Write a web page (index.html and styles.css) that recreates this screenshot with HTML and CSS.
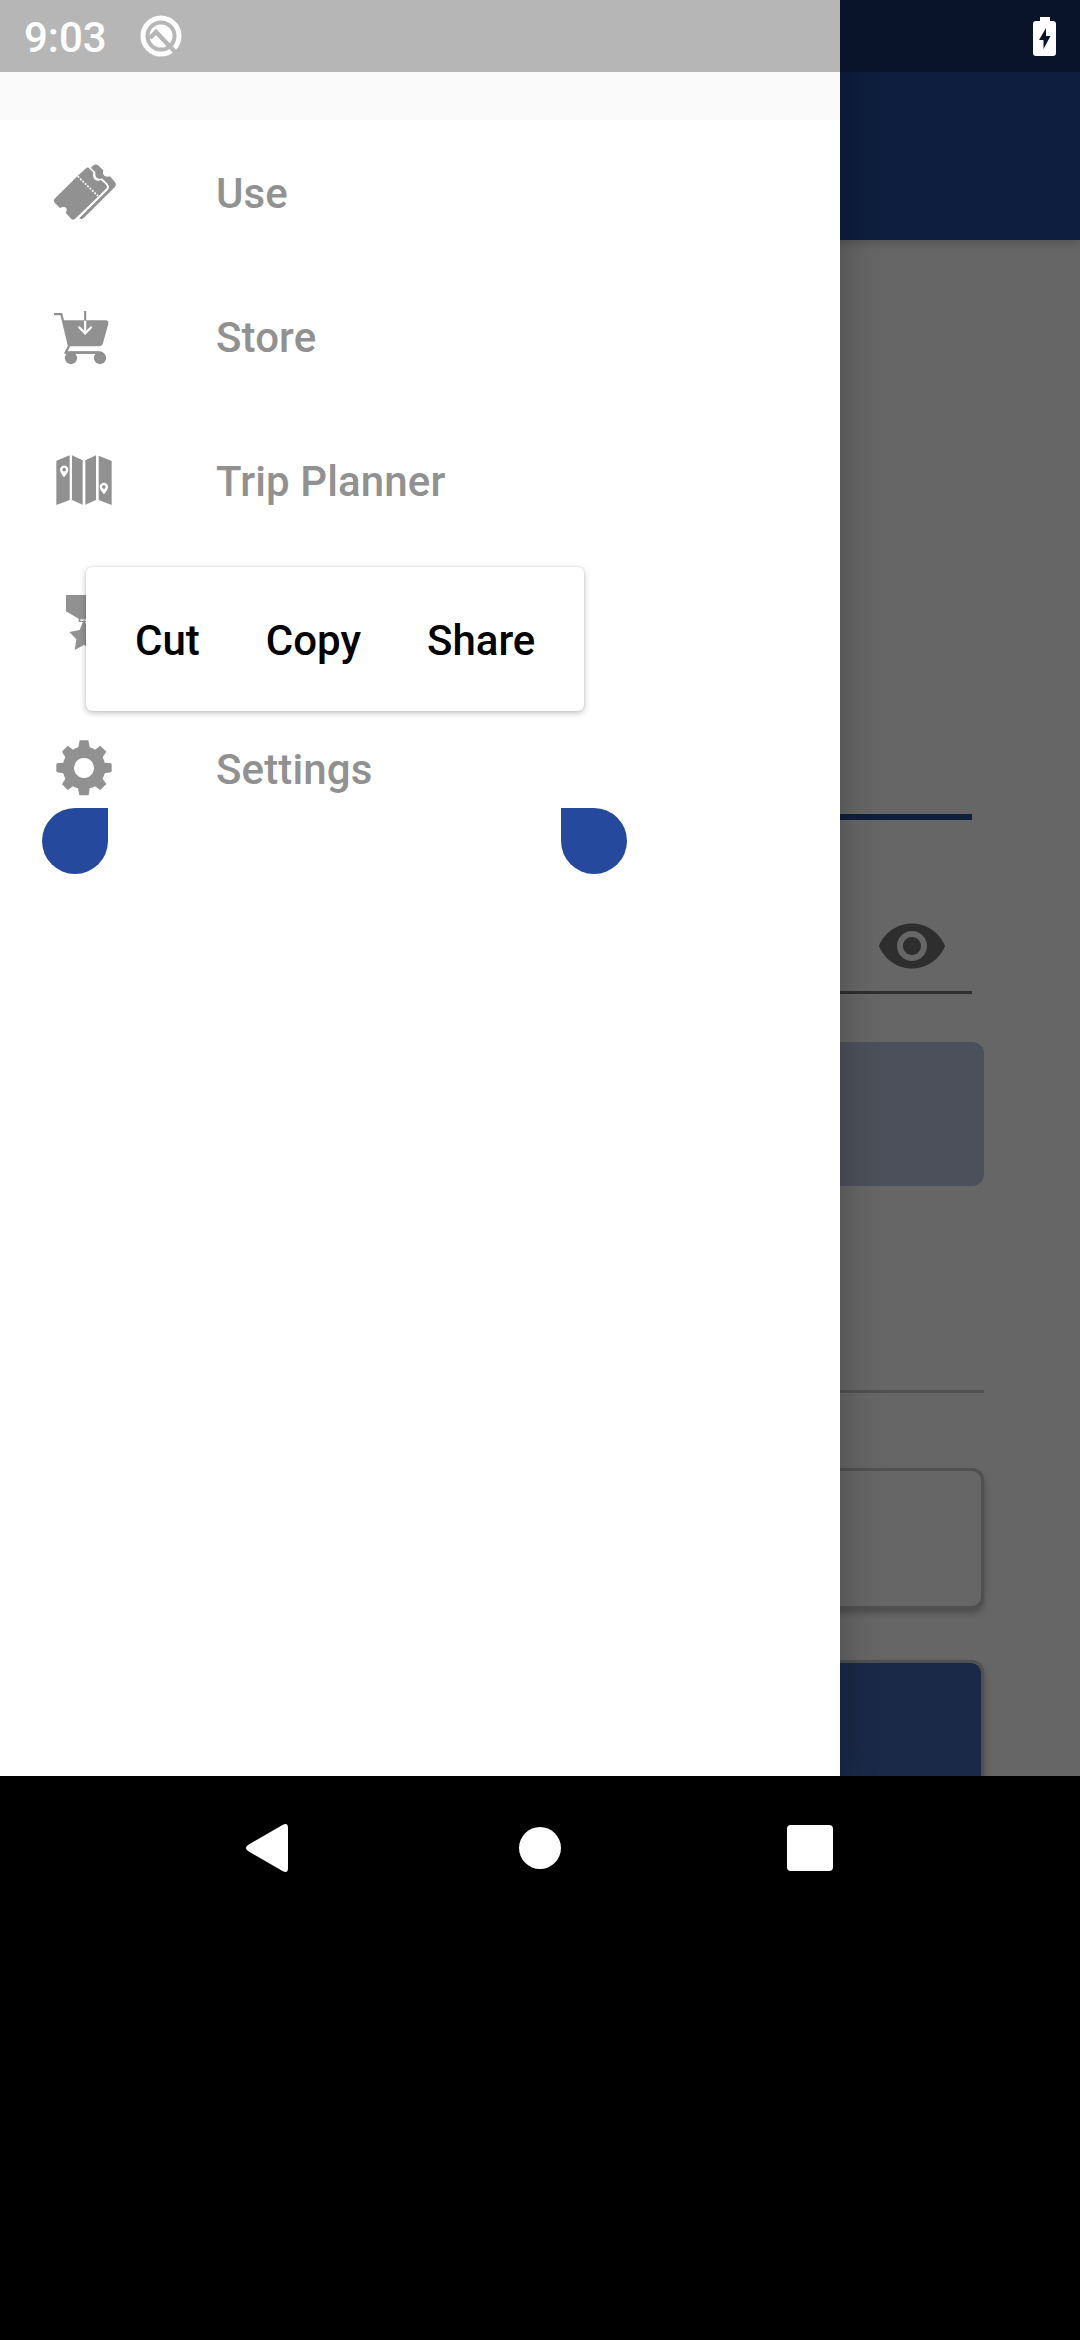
FILE: index.html
```html
<!DOCTYPE html>
<html lang="en">
<head>
<meta charset="utf-8">
<title>Navigation drawer</title>
<link rel="stylesheet" href="styles.css">
</head>
<body>
<div class="screen">
  <main class="app">
    <div class="app-bar"></div>
    <div class="form">
      <div class="field field-focused"></div>
      <div class="field field-password">
        <svg class="eye" viewBox="0 0 24 24"><path d="M12 4.5C7 4.500 2.730 7.610 1 12c1.730 4.390 6 7.500 11 7.500s9.270-3.110 11-7.500c-1.730-4.390-6-7.500-11-7.500zM12 17c-2.760 0-5-2.240-5-5s2.240-5 5-5 5 2.240 5 5-2.240 5-5 5zm0-8c-1.660 0-3 1.340-3 3s1.340 3 3 3 3-1.340 3-3-1.340-3-3-3z"/></svg>
      </div>
      <div class="submit"></div>
      <div class="divider"></div>
      <div class="card"></div>
      <div class="card card-blue"></div>
    </div>
  </main>

  <nav class="drawer">
    <div class="drawer-header"></div>
    <ul class="menu">
      <li class="item">
        <svg class="icon" viewBox="54 48 216 216">
          <path d="M145 106L169 84Q174 80 179 86L191 98Q186 112 196 120Q204 124 213 120L228 134Q234 141 228 148L137 235Q130 243 123 236L107 218Q114 208 106 202Q98 199 90 204L74 188Q68 181 76 174Z"/>
          <path d="M181 85L188 78Q196 70 206 77L220 91Q216 102 224 108Q231 112 240 109L254 125Q261 133 254 142L161 234Q155 240 147 235L234 149Q240 139 232 131L217 116Q209 119 200 114Q194 107 196 96Z"/>
          <path class="gap" d="M180 84L193 97Q189 109 198 116Q206 121 215 117L230 132Q237 140 230 148L142 237"/>
          <path class="perforation" d="M143 109L204 168"/>
        </svg>
        <span class="label">Use</span>
      </li>
      <li class="item">
        <svg class="icon" viewBox="54 480 216 216">
          <path class="frame" d="M72 522.500H94L117 618L107 638H205"/>
          <path d="M99 541H228Q237 542 235 552L219 609Q216 619 206 619H117Z"/>
          <circle cx="123" cy="654" r="18.500"/><circle cx="210" cy="654" r="18.500"/>
          <path d="M105 634H208Q220 634 226 647L220 655L201 641H130L112 651Z"/>
          <path class="frame" d="M165.500 513V542"/>
          <path class="arrow" d="M165.500 542V580M146 560L165.500 580L185 560"/>
        </svg>
        <span class="label">Store</span>
      </li>
      <li class="item">
        <svg class="icon" viewBox="54 42 216 216">
          <path d="M79 92L119 76V210L79 225ZM126 76L158 91V224L126 210ZM166 91L198 76V210L166 224ZM206 77L245 93V225L206 210Z"/>
          <path class="pin" fill-rule="evenodd" d="M102 142Q90 127 90 119A12.500 12.500 0 0 1 115 119Q115 127 102 142ZM102.500 113.500a5.500 5.500 0 1 0 .1 0ZM222 193Q209 179 209 171A12.500 12.500 0 0 1 234 171Q234 179 222 193ZM221.500 165.500a5.500 5.500 0 1 0 .1 0Z"/>
        </svg>
        <span class="label">Trip Planner</span>
      </li>
      <li class="item">
        <svg class="icon" viewBox="54 114 216 216">
          <path d="M110 135H214Q216 135 216 137V184L178 206V216H146V206L108 184V137Q108 135 110 135Z"/>
          <path class="pin" d="M151 208H173V213H151Z"/>
          <path d="M162 208L175 240L206 246L184 268L189 300L162 285L134 300L139 268L118 246L149 240Z"/>
        </svg>
      </li>
      <li class="item">
        <svg class="icon" viewBox="54 546 216 216">
          <path fill-rule="evenodd" d="M149 571H175L179 592Q188 594 195 599L211 587L229 605L218 622Q222 630 224 638L243 640Q245 641 245 643V664Q245 666 243 667L224 670Q222 678 218 686L229 702L211 720L195 709Q188 713 179 715L176 736H148L144 715Q136 713 129 709L113 720L96 703L106 686Q102 678 100 670L81 667Q79 666 79 664V643Q79 641 81 640L100 638Q102 630 106 622L96 605L113 587L129 599Q136 594 145 592ZM162 624a30 30 0 1 0 .1 0Z"/>
        </svg>
        <span class="label">Settings</span>
      </li>
    </ul>
  </nav>

  <div class="status-bar">
    <span class="clock">9:03</span>
    <svg class="debug" viewBox="0 0 42 42">
      <circle class="ring" cx="21" cy="21" r="18"/>
      <circle class="disc" cx="21" cy="21" r="11.500"/>
      <path class="cut" d="M10 23L16 17L37 39"/>
    </svg>
    <svg class="battery" viewBox="0 0 23 39"><path fill-rule="evenodd" d="M7 0H17V4H20Q23 4 23 7V36Q23 39 20 39H3Q0 39 0 36V7Q0 4 3 4H7ZM13 11L6 23H10.500V32L17.500 19H13Z"/></svg>
  </div>

  <div class="handle handle-start"></div>
  <div class="handle handle-end"></div>
  <div class="popup"><span>Cut</span><span>Copy</span><span>Share</span></div>
</div>
<footer class="nav-bar">
  <svg class="back" viewBox="0 0 42 48"><path d="M36.500 1Q42-2 42 4V44Q42 50 36.500 47L2 27Q-2 24 2 21Z"/></svg>
  <svg class="home" viewBox="0 0 42 42"><circle cx="21" cy="21" r="21"/></svg>
  <svg class="recents" viewBox="0 0 46 46"><rect width="46" height="46" rx="4"/></svg>
</footer>
</body>
</html>
```
FILE: styles.css
```css
* { box-sizing: border-box; }
body {
  margin: 0;
  width: 1080px;
  height: 2340px;
  overflow: hidden;
  background: #000;
  font-family: Roboto, "Noto Sans", sans-serif;
  font-weight: 500;
  font-size: 42px;
}
svg { display: block; flex: none; }

.screen { position: relative; height: 1776px; overflow: hidden; }

/* dimmed sign-in page */
.app { height: 1776px; background: #666; }
.app-bar { height: 240px; background: #0e1e3e; box-shadow: 0 2px 10px rgba(0, 0, 0, .22); }
.form { padding: 0 96px; display: flex; flex-direction: column; }
.field { margin-right: 12px; flex: none; }
.field-focused { height: 580px; border-bottom: 6px solid #0e1e3e; }
.field-password {
  height: 174px;
  border-bottom: 3px solid #2f2f2f;
  display: flex;
  justify-content: flex-end;
  align-items: flex-end;
  padding: 0 24px 9px 0;
}
.eye { width: 72px; height: 72px; fill: #2e2e2e; }
.submit { margin-top: 48px; height: 144px; border-radius: 12px; background: #4c505a; }
.divider { margin-top: 204px; height: 3px; background: #505050; }
.card {
  margin-top: 75px;
  height: 141px;
  border: 3px solid #505050;
  border-radius: 12px;
  background: #666;
  box-shadow: 0 4px 6px rgba(0, 0, 0, .25);
}
.card-blue { margin-top: 51px; height: 144px; background: #1a2947; background-clip: padding-box; }

/* drawer */
.drawer {
  position: absolute;
  inset: 0 auto 0 0;
  width: 840px;
  background: #fff;
  box-shadow: 0 0 36px rgba(0, 0, 0, .28);
}
.drawer-header { height: 120px; background: #fafafa; }
.menu { list-style: none; margin: 0; padding: 0; }
.item { height: 144px; padding-left: 48px; display: flex; align-items: center; gap: 96px; }
.icon { width: 72px; height: 72px; fill: #919191; }
.label { color: #919191; line-height: 50px; padding-top: 3px; letter-spacing: .12px; }
.gap { fill: none; stroke: #fff; stroke-width: 4; }
.perforation { fill: none; stroke: #fff; stroke-width: 5; stroke-dasharray: 6 4; }
.frame { fill: none; stroke: #919191; stroke-width: 6.500; }
.arrow { fill: none; stroke: #fff; stroke-width: 6.500; }
.pin { fill: #fff; }

/* status bar */
.status-bar {
  position: absolute;
  inset: 0 0 auto 0;
  height: 72px;
  padding: 0 24px;
  display: flex;
  align-items: center;
  background: #b6b6b6;
}
.status-bar::before {
  content: "";
  position: absolute;
  inset: 0 0 0 840px;
  background: #09142a;
}
.clock { color: #fff; line-height: 50px; padding-top: 3px; }
.debug { width: 42px; height: 42px; margin-left: 33px; }
.ring { fill: none; stroke: #fff; stroke-width: 5; }
.disc { fill: #fff; }
.cut { fill: none; stroke: #b6b6b6; stroke-width: 4.500; }
.battery { position: relative; width: 23px; height: 39px; margin-left: auto; fill: #fff; }

/* text selection */
.handle { position: absolute; top: 808px; width: 66px; height: 66px; background: #24499d; }
.handle-start { left: 42px; border-radius: 33px 0 33px 33px; }
.handle-end { left: 561px; border-radius: 0 33px 33px 33px; }
.popup {
  position: absolute;
  left: 86px;
  top: 567px;
  width: 498px;
  height: 144px;
  padding: 3px 0 0 49px;
  display: flex;
  align-items: center;
  gap: 66px;
  border-radius: 6px;
  background: #fff;
  box-shadow: 0 2px 6px rgba(0, 0, 0, .25), 0 0 2px rgba(0, 0, 0, .12);
  color: #000;
}

/* system navigation */
.nav-bar { height: 144px; padding-left: 246px; display: flex; align-items: center; fill: #fff; }
.back { width: 42px; height: 48px; }
.home { width: 42px; height: 42px; margin-left: 231px; }
.recents { width: 46px; height: 46px; margin-left: 226px; }
```
